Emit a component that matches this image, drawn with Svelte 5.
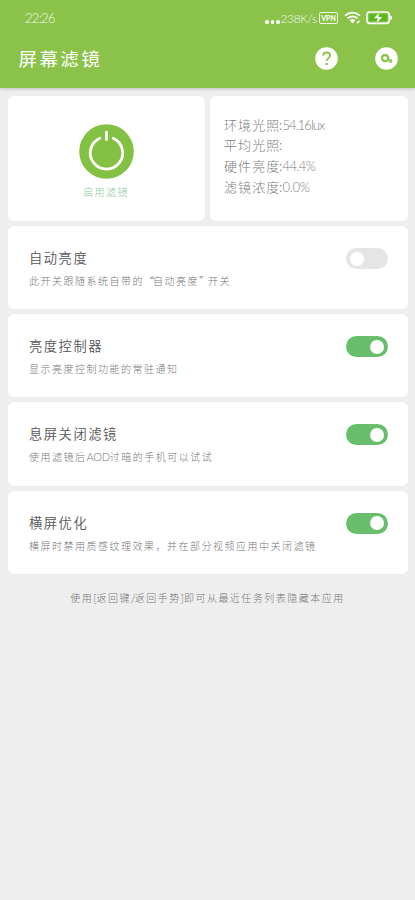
<script>
  const info = [
    ['环境光照', '54.16lux', -0.95],
    ['平均光照', '', 0],
    ['硬件亮度', '44.4%', -0.6],
    ['滤镜浓度', '0.0%', -0.3]
  ];
  let rows = $state([
    { title: '自动亮度', parts: ['此开关跟随系统自带的', '“', '自动亮度', '”', '开关'], on: false },
    { title: '亮度控制器', parts: ['显示亮度控制功能的常驻通知'], on: true },
    { title: '息屏关闭滤镜', parts: ['使用滤镜后', 'AOD', '过暗的手机可以试试'], on: true },
    { title: '横屏优化', parts: ['横屏时禁用质感纹理效果，并在部分视频应用中关闭滤镜'], on: true }
  ]);
</script>

<div class="screen">
  <header>
    <div class="status">
      <span class="time">22:26</span>
      <div class="tray">
        <span class="dots"><i></i><i></i><i></i></span>
        <span class="speed">238K/s</span>
        <span class="vpn">VPN</span>
        <svg class="wifi" width="18" height="14" viewBox="0 0 18 14" fill="none" stroke="#fff" stroke-width="1.7">
          <path d="M1 4.7Q8.5-1.5 16 4.7M3.5 7.4Q8.5 3.2 13.5 7.4" />
          <path d="M5.6 9.2Q8.5 7 11.4 9.2L8.5 12.5Z" fill="#fff" stroke="none" />
          <path d="M13 12.3l2.4-2.4" stroke-width="1.5" />
        </svg>
        <svg class="battery" width="27" height="14" viewBox="0 0 27 14">
          <rect x="1" y="1" width="22.2" height="11.4" rx="2.8" fill="none" stroke="#fff" stroke-width="1.6" />
          <rect x="3.3" y="3.3" width="17.6" height="6.8" rx="1" fill="#55b91c" />
          <path d="M24.2 4.2q2 .5 2 2.5t-2 2.5z" fill="#fff" />
          <path d="M13.4 1.5L7.7 7.3h3.7l-.9 5 6-6.2h-4z" fill="#fff" stroke="#8bc34a" stroke-width=".4" />
        </svg>
      </div>
    </div>
    <div class="bar">
      <h1>屏幕滤镜</h1>
      <div class="actions">
        <svg width="23" height="23" viewBox="0 0 23 23" aria-label="help">
          <circle cx="11.5" cy="11.5" r="11.3" fill="#fff" />
          <path d="M8.1 8.6C8.3 6.6 9.7 5.5 11.6 5.5c2 0 3.5 1.2 3.5 3.1 0 2.7-3.5 2.8-3.5 5.4" fill="none" stroke="#8bc34a" stroke-width="1.8" />
          <circle cx="11.6" cy="17.1" r="1.25" fill="#8bc34a" />
        </svg>
        <svg width="23" height="23" viewBox="0 0 23 23" aria-label="settings">
          <circle cx="11.5" cy="11.5" r="11.3" fill="#fff" />
          <circle cx="10.1" cy="11.1" r="3" fill="none" stroke="#8bc34a" stroke-width="2.1" />
          <circle cx="10.1" cy="11.1" r="4" fill="none" stroke="#8bc34a" stroke-width=".8" stroke-dasharray="1.7 1.44" />
          <circle cx="15.4" cy="13.9" r="1.25" fill="none" stroke="#8bc34a" stroke-width="1.5" />
        </svg>
      </div>
    </div>
  </header>

  <main>
    <div class="top">
      <section class="card power">
        <svg width="55" height="55" viewBox="0 0 55 55">
          <circle cx="27.5" cy="27.5" r="27.3" fill="#82c141" />
          <path d="M20.8 14.2A16.2 16.2 0 1 0 34.2 14.2" fill="none" stroke="#fff" stroke-width="2.8" stroke-linecap="round" />
          <path d="M27.5 8.2v7.4" stroke="#fff" stroke-width="2.8" stroke-linecap="round" />
        </svg>
        <span>启用滤镜</span>
      </section>
      <section class="card info">
        {#each info as [label, value, space]}
          <div><span class="label">{label}</span><span class="colon">:</span><span class="value" style="letter-spacing:{space}px">{value}</span></div>
        {/each}
      </section>
    </div>

    {#each rows as row}
      <section class="card row">
        <div class="text">
          <h2>{row.title}</h2>
          <p>{#each row.parts as part}<span class:latin={part === 'AOD'} class:open={part === '“'} class:close={part === '”'}>{part}</span>{/each}</p>
        </div>
        <button class="switch" class:on={row.on} aria-label={row.title} onclick={() => (row.on = !row.on)}><i></i></button>
      </section>
    {/each}
  </main>
  <footer>使用<b>[</b>返回键<b>/</b>返回手势<b>]</b>即可从最近任务列表隐藏本应用</footer>
</div>

<style>
  :global(body) { margin: 0; background: #eee; }
  .screen {
    height: 900px;
    overflow: hidden;
    background: #eee;
    font-family: "Noto Sans CJK SC", sans-serif;
    font-weight: 300;
    white-space: nowrap;
  }
  header {
    height: 88px;
    background: #8bc34a;
    color: #fff;
    box-shadow: 0 1px 3px #0003;
  }
  .status {
    height: 36px;
    display: flex;
    justify-content: space-between;
    align-items: center;
    padding: 0 22px 0 25px;
    box-sizing: border-box;
    font-family: Lato, sans-serif;
  }
  .time { font-size: 13px; letter-spacing: -0.7px; opacity: .92; }
  .tray { display: flex; align-items: center; }
  .dots { display: flex; gap: 2px; margin: 8px 1px 0 0; }
  .dots i { width: 3.5px; height: 3.5px; border-radius: 50%; background: #fff; }
  .speed { width: 38.5px; font-size: 12px; letter-spacing: -0.35px; opacity: .92; }
  .vpn {
    width: 19px;
    height: 12px;
    box-sizing: border-box;
    border: 1.3px solid #fffd;
    border-radius: 2px;
    text-align: center;
    font-size: 7px;
    line-height: 10px;
    font-weight: 700;
  }
  .wifi { margin-left: 6px; }
  .battery { margin-left: 4px; }
  .bar {
    height: 45px;
    display: flex;
    justify-content: space-between;
    align-items: center;
    padding: 0 17.5px 0 18.5px;
  }
  h1 { margin: -2px 0 0; font-size: 18.5px; line-height: 26px; font-weight: 400; letter-spacing: 2.4px; }
  .actions { display: flex; gap: 36.5px; }
  .actions svg, .power svg { display: block; }
  main { display: flex; flex-direction: column; gap: 5px; padding: 7.5px 7px 0 7.5px; }
  .top { display: grid; grid-template-columns: 197px 1fr; gap: 5.5px; height: 125.5px; }
  .card { background: #fff; border-radius: 6px; box-shadow: 0 0 1px #0000000c; }
  .power { display: flex; flex-direction: column; align-items: center; padding-top: 28px; }
  .power span { margin-top: 5px; font-size: 10px; line-height: 16px; letter-spacing: 1.4px; color: #8bca9d; }
  .info { padding: 19px 0 0 14px; color: #808080; font-size: 13px; }
  .info div { display: flex; height: 20.9px; line-height: 20.9px; }
  .label { width: 55px; letter-spacing: 1.1px; }
  .colon { width: 3.5px; }
  .value { font-family: Lato, sans-serif; font-size: 13px; }
  .row {
    height: 83.2px;
    display: flex;
    justify-content: space-between;
    align-items: flex-start;
    padding: 22px 20.5px 0 21.5px;
    box-sizing: border-box;
  }
  h2 { margin: -1px 0 0; font-size: 13.3px; line-height: 21px; font-weight: 350; letter-spacing: 1.5px; color: #555; }
  p { margin: 4px 0 0; font-size: 10px; line-height: 18px; letter-spacing: 1.5px; color: #777; }
  .latin { font-family: Lato, sans-serif; font-size: 11px; letter-spacing: -0.3px; }
  .open, .close { display: inline-block; width: 9px; letter-spacing: 0; }
  .open { text-align: center; }
  .switch {
    display: flex;
    width: 42px;
    height: 21px;
    margin: 0;
    padding: 3.5px 4px;
    box-sizing: border-box;
    border: 0;
    border-radius: 11px;
    background: #e5e5e5;
  }
  .switch i { width: 14px; height: 14px; border-radius: 50%; background: #fff; }
  .switch.on { justify-content: flex-end; background: #69be6b; }
  footer { margin-top: 15px; text-align: center; font-size: 10px; line-height: 18px; letter-spacing: 1.48px; color: #777; }
  footer b { font-weight: 300; letter-spacing: 0; }
</style>
